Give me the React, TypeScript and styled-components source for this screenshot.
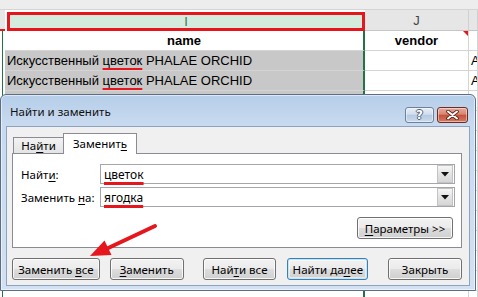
import React from 'react';
import styled, { createGlobalStyle } from 'styled-components';

const GlobalStyle = createGlobalStyle`
  html, body {
    margin: 0;
    padding: 0;
  }
  body {
    width: 478px;
    height: 297px;
    overflow: hidden;
    background: #fff;
    font-family: 'Noto Sans', 'Liberation Sans', sans-serif;
  }
`;

const Page = styled.div`
  position: relative;
  width: 478px;
  height: 297px;
  overflow: hidden;
  background: #fff;
`;

/* ---------- spreadsheet behind the dialog ---------- */

const Sheet = styled.div`
  display: grid;
  grid-template-columns: 5px 360px 104px 1fr;
  grid-template-rows: 10px 21px;
  grid-auto-rows: 20px;
  font-family: 'Liberation Sans', Arial, sans-serif;
  font-size: 13px;
  color: #000;
`;

const TopStrip = styled.div`
  grid-column: 1 / -1;
  background: #ededed;
  border-bottom: 1px solid #d4d4d4;
`;

const ColHeader = styled.div<{ $selected?: boolean }>`
  box-sizing: border-box;
  display: flex;
  align-items: center;
  justify-content: center;
  font-size: 13px;
  background: ${p => (p.$selected ? '#d3ecdd' : '#e6e6e6')};
  color: ${p => (p.$selected ? '#3f6f55' : '#444')};
  border-bottom: 1px solid #c6c6c6;
  border-right: 1px solid #d0d0d0;
  ${p =>
    p.$selected &&
    `
    margin: 2px 0 0 2px;
    border: 3px solid #e5161d;
  `}
`;

const HeaderGutter = styled.div`
  background: #e6e6e6;
  border-bottom: 2px solid #e5161d;
`;

const Gutter = styled.div`
  background: linear-gradient(to right, #fff 2px, #217346 2px, #217346 3px, #fff 3px);
`;

const Cell = styled.div<{ $shaded?: boolean; $bold?: boolean; $center?: boolean; $edge?: boolean }>`
  box-sizing: border-box;
  position: relative;
  display: flex;
  align-items: center;
  justify-content: ${p => (p.$center ? 'center' : 'flex-start')};
  padding-left: ${p => (p.$center ? 0 : 2)}px;
  white-space: nowrap;
  overflow: hidden;
  font-weight: ${p => (p.$bold ? 700 : 400)};
  background: ${p => (p.$shaded ? '#c8c8c8' : '#fff')};
  border-bottom: 1px solid #d4d4d4;
  border-right: ${p => (p.$edge ? '2px solid #217346' : '1px solid #d4d4d4')};
`;

const CommentMark = styled.span`
  position: absolute;
  top: 0;
  right: 0;
  width: 0;
  height: 0;
  border-top: 5px solid #e5161d;
  border-left: 5px solid transparent;
`;

const Mark = styled.span`
  text-decoration: underline;
  text-decoration-color: #e5161d;
  text-decoration-thickness: 3px;
  text-underline-offset: 3px;
  text-decoration-skip-ink: none;
`;

/* ---------- find & replace dialog ---------- */

const Dialog = styled.div`
  position: absolute;
  left: 0;
  top: 94px;
  width: 476px;
  height: 197px;
  box-sizing: border-box;
  display: flex;
  flex-direction: column;
  padding: 0 5px 4px 5px;
  border: 1px solid #5d6d84;
  border-radius: 6px 6px 0 0;
  background: linear-gradient(#b6cee9, #c8daef 30px, #d2e1f3);
  box-shadow: inset 0 0 0 1px rgba(255, 255, 255, 0.55);
  font-family: 'Noto Sans', 'Liberation Sans', sans-serif;
  font-size: 11.5px;
  color: #000;
`;

const TitleBar = styled.div`
  display: flex;
  align-items: flex-start;
  height: 31px;
`;

const Title = styled.div`
  margin: 9px 0 0 4px;
  color: #111;
`;

const CaptionButtons = styled.div`
  display: flex;
  gap: 3px;
  margin: 12px 2px 0 auto;
`;

const CaptionButton = styled.div<{ $close?: boolean }>`
  box-sizing: border-box;
  width: ${p => (p.$close ? 31 : 29)}px;
  height: 16px;
  display: flex;
  align-items: center;
  justify-content: center;
  border-radius: 3px;
  border: 1px solid ${p => (p.$close ? '#6e2d23' : '#6f8098')};
  background: ${p =>
    p.$close
      ? 'linear-gradient(#e8a898, #d98672 45%, #c5503a 50%, #d47a63)'
      : 'linear-gradient(#e6eef8, #d2deee 45%, #b5c9e2 50%, #cadaee)'};
  box-shadow: inset 0 0 0 1px rgba(255, 255, 255, 0.45);
`;

const HelpGlyph = styled.span`
  font-family: 'DejaVu Sans', sans-serif;
  font-weight: 700;
  font-size: 12px;
  line-height: 1;
  color: #fff;
  text-shadow: 1px 0 0 #53647c, -1px 0 0 #53647c, 0 1px 0 #53647c, 0 -1px 0 #53647c;
`;

const Client = styled.div`
  flex: 1;
  display: flex;
  flex-direction: column;
  padding: 6px 7px 0 5px;
  background: #f0f0f0;
  border: 1px solid #8ea3bd;
`;

const TabStrip = styled.div`
  display: flex;
  align-items: flex-end;
  height: 20px;
  padding-left: 1px;
`;

const Tab = styled.div<{ $active?: boolean; $w: number }>`
  box-sizing: border-box;
  width: ${p => p.$w}px;
  height: ${p => (p.$active ? 21 : 16)}px;
  margin-bottom: ${p => (p.$active ? -1 : 0)}px;
  margin-left: ${p => (p.$active ? -1 : 0)}px;
  position: relative;
  z-index: ${p => (p.$active ? 1 : 0)};
  display: flex;
  align-items: center;
  justify-content: center;
  padding-bottom: ${p => (p.$active ? 1 : 0)}px;
  border: 1px solid #898c95;
  border-bottom: none;
  background: ${p => (p.$active ? '#fff' : 'linear-gradient(#f3f3f3, #e4e4e4)')};
`;

const Panel = styled.div`
  box-sizing: border-box;
  width: 450px;
  height: 95px;
  display: flex;
  flex-direction: column;
  gap: 3px;
  padding: 10px 6px 0 8px;
  background: #fff;
  border: 1px solid #898c95;
`;

const FieldRow = styled.div`
  display: grid;
  grid-template-columns: 79px 1fr;
  align-items: center;
  height: 20px;
`;

const Combo = styled.div`
  box-sizing: border-box;
  height: 20px;
  display: flex;
  align-items: center;
  border: 1px solid #a3a6ad;
  background: #fff;
`;

const ComboText = styled.div`
  flex: 1;
  padding-left: 3px;
  font-size: 12px;
`;

const DropButton = styled.div`
  box-sizing: border-box;
  width: 16px;
  height: 18px;
  margin-right: 1px;
  display: flex;
  align-items: center;
  justify-content: center;
  border: 1px solid #c3c3c3;
  background: linear-gradient(#f6f6f6, #e3e3e3 50%, #d6d6d6);
`;

const ParamsRow = styled.div`
  display: flex;
  justify-content: flex-end;
  margin-top: 7px;
  padding-right: 2px;
`;

const ButtonRow = styled.div`
  display: flex;
  margin-top: 10px;
`;

const Button = styled.div<{ $w: number; $ml?: number; $primary?: boolean }>`
  box-sizing: border-box;
  width: ${p => p.$w}px;
  height: 22px;
  margin-left: ${p => p.$ml ?? 0}px;
  display: flex;
  align-items: center;
  justify-content: center;
  border-radius: 3px;
  border: 1px solid ${p => (p.$primary ? '#3c7fb1' : '#707070')};
  background: linear-gradient(#f2f2f2, #ebebeb 48%, #dddddd 52%, #cfcfcf);
  box-shadow: ${p =>
    p.$primary
      ? 'inset 0 0 0 1px #bfe6f9, inset 0 0 0 2px rgba(255,255,255,0.5)'
      : 'inset 0 0 0 1px rgba(255,255,255,0.8)'};
  white-space: nowrap;
`;

const Key = styled.span`
  text-decoration: underline;
  text-underline-offset: 2px;
`;

const Arrow = styled.svg`
  position: absolute;
  left: 0;
  top: 0;
  pointer-events: none;
`;

const CloseIcon = () => (
  <svg width="13" height="10" viewBox="0 0 13 10">
    <path d="M2 1.5 L11 8.5 M11 1.5 L2 8.5" stroke="#5a2219" strokeWidth="3.6" strokeLinecap="round" />
    <path d="M2 1.5 L11 8.5 M11 1.5 L2 8.5" stroke="#fff" strokeWidth="2" strokeLinecap="round" />
  </svg>
);

const DownTriangle = () => (
  <svg width="8" height="5" viewBox="0 0 8 5">
    <polygon points="0,0 8,0 4,4.5" fill="#111" />
  </svg>
);

const Entry = () => (
  <span>
    Искусственный <Mark>цветок</Mark> PHALAE ORCHID
  </span>
);

const rows = [
  { shaded: true, name: true },
  { shaded: true, name: true },
  { shaded: true, name: false },
  ...Array.from({ length: 10 }, () => ({ shaded: false, name: false })),
];

export default function App() {
  return (
    <Page>
      <GlobalStyle />
      <Sheet>
        <TopStrip />
        <HeaderGutter />
        <ColHeader $selected>I</ColHeader>
        <ColHeader>J</ColHeader>
        <ColHeader />

        <Gutter />
        <Cell $bold $center $edge>
          name
        </Cell>
        <Cell $bold $center>
          vendor
          <CommentMark />
        </Cell>
        <Cell />

        {rows.map((r, i) => (
          <React.Fragment key={i}>
            <Gutter />
            <Cell $shaded={r.shaded} $edge>
              {r.name && <Entry />}
            </Cell>
            <Cell />
            <Cell>{r.name ? 'A' : ''}</Cell>
          </React.Fragment>
        ))}
      </Sheet>

      <Dialog>
        <TitleBar>
          <Title>Найти и заменить</Title>
          <CaptionButtons>
            <CaptionButton>
              <HelpGlyph>?</HelpGlyph>
            </CaptionButton>
            <CaptionButton $close>
              <CloseIcon />
            </CaptionButton>
          </CaptionButtons>
        </TitleBar>

        <Client>
          <TabStrip>
            <Tab $w={51}>
              <span>
                На<Key>й</Key>ти
              </span>
            </Tab>
            <Tab $active $w={74}>
              <span>
                Заменит<Key>ь</Key>
              </span>
            </Tab>
          </TabStrip>

          <Panel>
            <FieldRow>
              <span>
                Найт<Key>и</Key>:
              </span>
              <Combo>
                <ComboText>
                  <Mark>цветок</Mark>
                </ComboText>
                <DropButton>
                  <DownTriangle />
                </DropButton>
              </Combo>
            </FieldRow>
            <FieldRow>
              <span>
                Заменить <Key>н</Key>а:
              </span>
              <Combo>
                <ComboText>
                  <Mark>ягодка</Mark>
                </ComboText>
                <DropButton>
                  <DownTriangle />
                </DropButton>
              </Combo>
            </FieldRow>
            <ParamsRow>
              <Button $w={96}>
                <span>
                  <Key>П</Key>араметры &gt;&gt;
                </span>
              </Button>
            </ParamsRow>
          </Panel>

          <ButtonRow>
            <Button $w={88}>
              <span>
                Заменить <Key>в</Key>се
              </span>
            </Button>
            <Button $w={74} $ml={10}>
              <span>
                <Key>З</Key>аменить
              </span>
            </Button>
            <Button $w={74} $ml={19}>
              <span>
                Най<Key>т</Key>и все
              </span>
            </Button>
            <Button $w={81} $ml={11} $primary>
              <span>
                Найти да<Key>л</Key>ее
              </span>
            </Button>
            <Button $w={74} $ml={20}>
              Закрыть
            </Button>
          </ButtonRow>
        </Client>
      </Dialog>

      <Arrow width="478" height="297" viewBox="0 0 478 297">
        <line x1="155" y1="226" x2="104" y2="250" stroke="#e5161d" strokeWidth="4" strokeLinecap="round" />
        <polygon points="90,256 104.5,240.5 111.5,255" fill="#e5161d" />
      </Arrow>
    </Page>
  );
}
